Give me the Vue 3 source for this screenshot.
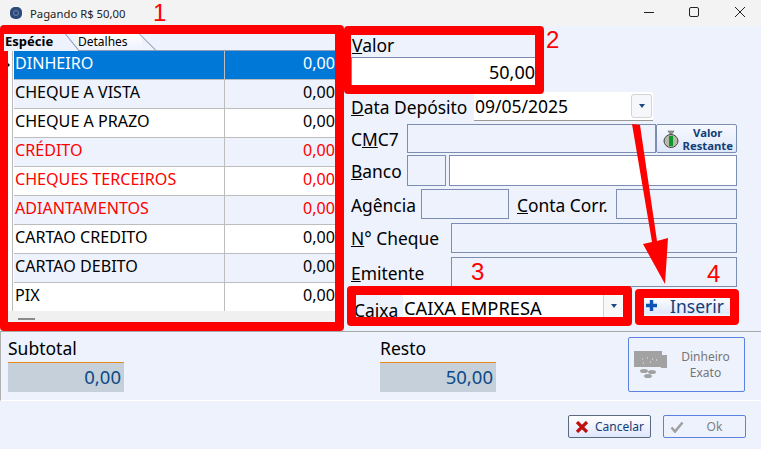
<script setup>
const rows = [
  { name: 'DINHEIRO', kind: 'sel' },
  { name: 'CHEQUE A VISTA', kind: '' },
  { name: 'CHEQUE A PRAZO', kind: '' },
  { name: 'CRÉDITO', kind: 'red' },
  { name: 'CHEQUES TERCEIROS', kind: 'red' },
  { name: 'ADIANTAMENTOS', kind: 'red' },
  { name: 'CARTAO CREDITO', kind: '' },
  { name: 'CARTAO DEBITO', kind: '' },
  { name: 'PIX', kind: '' }
]
</script>

<template>
  <div class="win">
    <header class="title">
      <span class="appicon"><i></i></span>
      <span class="ttext">Pagando R$ 50,00</span>
      <svg class="wc" width="117" height="12" viewBox="0 0 117 12">
        <path d="M0 6.5h10" stroke="#222" fill="none"/>
        <rect x="45.5" y="1.5" width="9" height="9" rx="1.5" stroke="#222" fill="none"/>
        <path d="M91 1l10 10M101 1L91 11" stroke="#222" fill="none"/>
      </svg>
    </header>

    <main class="main">
      <section class="left">
        <div class="tabs">
          <span class="tab on">Espécie</span>
          <span class="tab">Detalhes</span>
        </div>
        <div class="grid">
          <span class="marker"></span>
          <div v-for="(r, i) in rows" :key="r.name" class="row" :class="[r.kind, i % 2 ? 'odd' : 'even']">
            <span class="name">{{ r.name }}</span>
            <span class="amt">0,00</span>
          </div>
        </div>
        <div class="hscroll"><span class="thumb"></span></div>
      </section>

      <section class="form">
        <div class="valor">
          <div class="vlabel"><u>V</u>alor</div>
          <div class="vinput">50,00</div>
        </div>
        <div class="frow date">
          <label class="l1"><u>D</u>ata Depósito</label>
          <div class="datebox">09/05/2025<span class="ddbtn"><i class="tri"></i></span></div>
        </div>
        <div class="frow cmc">
          <label class="l2">C<u>M</u>C7</label>
          <div class="inp w248"></div>
          <button class="vr">
            <svg width="16" height="18" viewBox="0 0 16 18">
              <path d="M5 1h6l-2 3h-2z" fill="#9a9a8a" stroke="#555" stroke-width=".5"/>
              <ellipse cx="8" cy="11" rx="7" ry="6.5" fill="#b8b8a8" stroke="#444"/>
              <rect x="6" y="6" width="4" height="10" fill="#0a9a2a"/>
            </svg>
            <span>Valor<br>Restante</span>
          </button>
        </div>
        <div class="frow banco">
          <label class="l2"><u>B</u>anco</label>
          <div class="inp w39"></div>
          <div class="inp white grow"></div>
        </div>
        <div class="frow ag">
          <label class="l3">Agência</label>
          <div class="inp w88"></div>
          <label class="l4"><u>C</u>onta Corr.</label>
          <div class="inp grow"></div>
        </div>
        <div class="frow ch">
          <label class="l5"><u>N</u>° Cheque</label>
          <div class="inp grow"></div>
        </div>
        <div class="frow em">
          <label class="l5"><u>E</u>mitente</label>
          <div class="inp grow"></div>
        </div>
        <div class="frow cx">
          <label class="caixa">Caixa</label>
          <div class="select">CAIXA EMPRESA<span class="selbtn"><i class="tri"></i></span></div>
          <button class="ins">
            <svg width="13" height="13" viewBox="0 0 13 13"><path d="M6.5 1v11M1 6.5h11" stroke="#0d55b5" stroke-width="3.4"/></svg>
            <span>Inserir</span>
          </button>
        </div>
      </section>
    </main>

    <section class="summary">
      <div class="sum s1">
        <div class="slabel">Subtotal</div>
        <div class="sval">0,00</div>
      </div>
      <div class="sum s2">
        <div class="slabel">Resto</div>
        <div class="sval">50,00</div>
      </div>
      <button class="exato">
        <svg width="33" height="28" viewBox="0 0 33 28">
          <rect x="0" y="0" width="28" height="16" fill="#a2a2a2"/>
          <rect x="27" y="4" width="6" height="13" fill="#a2a2a2"/>
          <path d="M8 8h1M13 7h1M18 8h1M22 9h1M9 12h1M16 11h1" stroke="#eee" stroke-width="1"/>
          <ellipse cx="10" cy="20" rx="4" ry="2" fill="#a2a2a2"/>
          <ellipse cx="18" cy="21" rx="4" ry="2" fill="#a2a2a2"/>
          <ellipse cx="14" cy="25" rx="4" ry="2" fill="#a2a2a2"/>
        </svg>
        <span>Dinheiro<br>Exato</span>
      </button>
    </section>

    <footer class="foot">
      <button class="fbtn cancel">
        <svg width="14" height="12" viewBox="0 0 14 12"><path d="M2 1l10 10M12 1L2 11" stroke="#c00f0f" stroke-width="3.2"/></svg>
        <span>Cancelar</span>
      </button>
      <button class="fbtn ok">
        <svg width="14" height="12" viewBox="0 0 14 12"><path d="M1.5 6.5l3.5 4L12.5 1.5" stroke="#a0a0a0" stroke-width="2.6" fill="none"/></svg>
        <span>Ok</span>
      </button>
    </footer>

    <!-- annotations drawn over the screenshot -->
    <div class="mark m1"></div>
    <div class="mark m2"></div>
    <div class="mark m3"></div>
    <div class="mark m4"></div>
    <span class="num n1">1</span>
    <span class="num n2">2</span>
    <span class="num n3">3</span>
    <span class="num n4">4</span>
    <svg class="arrow" width="761" height="449" viewBox="0 0 761 449">
      <path d="M632 124l8 1 17 116 11-3-3 46-22-40 9-2z" fill="#f00"/>
    </svg>
  </div>
</template>

<style>
html, body { margin: 0; padding: 0; background: #edf2fc; }
</style>

<style scoped>
.win {
  position: relative; width: 761px; height: 449px; overflow: hidden;
  display: flex; flex-direction: column; background: #edf2fc;
  font-family: "Noto Sans", "DejaVu Sans", sans-serif; color: #000;
}
.title { height: 26px; background: #f3f3f3; display: flex; align-items: center; padding-left: 10px; position: relative; flex: none; }
.appicon { width: 12px; height: 12px; border-radius: 5px; background: #2c4a78; display: flex; align-items: center; justify-content: center; }
.appicon i { width: 4px; height: 4px; border: 1px solid #6f86ab; border-radius: 50%; }
.ttext { font-size: 11.3px; margin-left: 8px; color: #222; }
.wc { position: absolute; left: 644px; top: 6px; }

.main { height: 305px; display: flex; flex: none; border-bottom: 1px solid #a8a8a8; }
.left { width: 327px; margin-left: 8px; margin-right: 16px; padding-top: 8px; flex: none; }
.tabs { height: 16px; display: flex; background: #edf2fc; border-bottom: 1px solid #8b9bb8; }
.tab { font-size: 12px; line-height: 15px; position: relative; height: 16px; box-sizing: border-box; }
.tab.on { font-size: 13px; font-weight: 700; margin-left: -4px; width: 74px; height: 17px; padding-left: 1px; background: #edf2fc; z-index: 1; }
.tab.on::after { content: ""; position: absolute; left: 61px; top: 0; width: 1px; height: 21px; background: #8b9bb8; transform: rotate(-39deg); transform-origin: top; }
.tab:not(.on) { background: linear-gradient(#fff, #edf2fc); width: 64px; padding-left: 0; }
.tab:not(.on)::after { content: ""; position: absolute; left: 61px; top: 0; width: 1px; height: 23px; background: #8b9bb8; transform: rotate(-45deg); transform-origin: top; }
.grid { position: relative; padding-left: 4px; background: #fff; }
.grid::before { content: ""; position: absolute; left: 4px; top: 0; bottom: 0; width: 1px; background: #bbb; }
.marker { position: absolute; left: 0; top: 12px; border-left: 2px solid #000; border-top: 2px solid transparent; border-bottom: 2px solid transparent; z-index: 2; }
.row { height: 28px; margin-left: 2px; border-bottom: 1px solid #bdbdbd; display: flex; font-size: 16.1px; line-height: 25px; }
.row:last-of-type { border-bottom: 0; }
.row.even { background: #fff; }
.row.odd { background: #edf2fc; }
.row.sel { background: #0078d7; color: #fff; }
.row.red { color: #f00; }
.row .name { width: 209px; padding-left: 1px; border-right: 1px solid #bdbdbd; }
.row .amt { flex: 1; text-align: right; }
.hscroll { height: 11px; background: #f0f0f0; position: relative; }
.thumb { position: absolute; left: 10px; top: 7px; width: 17px; height: 2px; background: #8a8a8a; }

.form { flex: 1; position: relative; }
.valor { width: 184px; margin-top: 9px; }
.vlabel { height: 22px; font-size: 17.5px; line-height: 21px; background: #edf2fc; padding-left: 1px; }
.vinput { height: 28px; background: #fff; border-top: 1px solid #7b8db0; border-left: 1px solid #7b8db0; box-sizing: border-box; text-align: right; font-size: 18px; line-height: 28px; }
.frow { display: flex; align-items: center; }
label { font-size: 17.4px; flex: none; box-sizing: border-box; }
.date { margin-top: 7px; height: 29px; }
.l1 { width: 123px; }
.datebox { position: relative; width: 179px; height: 29px; background: #fff; border-bottom: 1px solid #999; box-sizing: border-box; font-size: 17.5px; line-height: 28px; padding-left: 1px; }
.ddbtn { position: absolute; right: 1px; top: 2px; width: 21px; height: 24px; background: #f5f7fb; border: 1px solid #d4d4d4; border-radius: 3px; box-sizing: border-box; display: flex; align-items: center; justify-content: center; }
.tri { display: block; border-top: 4px solid #1c4a80; border-left: 3.5px solid transparent; border-right: 3.5px solid transparent; }
.inp { border: 1px solid #7b8db0; box-sizing: border-box; height: 100%; flex: none; }
.inp.white { background: #fff; }
.inp.grow { flex: 1; }
.cmc { margin-top: 3px; height: 29px; width: 386px; }
.l2 { width: 56px; }
.w248 { width: 249px; }
.vr { width: 81px; height: 29px; border: 1px solid #7b8db0; border-radius: 2px; background: linear-gradient(#f7f9fe, #dfe7fb); padding: 0 3px 0 6px; display: flex; align-items: center; justify-content: space-between; font: 700 11.3px/13px "Noto Sans", sans-serif; color: #123e78; flex: none; box-sizing: border-box; }
.vr span { text-align: center; }
.banco { margin-top: 2px; height: 31px; width: 386px; }
.w39 { width: 39px; margin-right: 3px; }
.ag { margin-top: 3px; height: 30px; width: 386px; }
.ag label { padding-top: 1px; }
.l3 { width: 70px; }
.w88 { width: 88px; }
.l4 { width: 99px; margin-left: 8px; }
.ch { margin-top: 4px; height: 30px; width: 386px; }
.l5 { width: 100px; }
.em { margin-top: 4px; height: 30px; width: 386px; }
.em label { padding-top: 1px; }
.cx { margin-top: 11px; height: 18px; width: 386px; align-items: stretch; position: relative; }
.caixa { width: 52px; padding-left: 3px; line-height: 25px; }
.select { position: relative; width: 220px; height: 22px; margin-top: -3px; background: #fff; font-size: 18.3px; line-height: 25px; padding-left: 1px; box-sizing: border-box; }
.selbtn { position: absolute; right: 0; top: 0; width: 20px; height: 22px; border-left: 1px solid #d0d0d0; background: #f8f8f8; display: flex; align-items: center; justify-content: center; box-sizing: border-box; }
.ins { position: absolute; left: 293px; top: -2px; width: 86px; height: 18px; border: 0; padding: 0 0 0 1px; background: linear-gradient(#fff, #dfe7fb); display: flex; align-items: center; gap: 12px; font: 17.5px/18px "Noto Sans", sans-serif; color: #123e78; }
.ins span { position: relative; top: 1px; }

.summary { height: 68px; position: relative; display: flex; flex: none; border-bottom: 1px solid #fff; border-left: 1px solid #b0b0b0; }
.sum { width: 116px; padding-top: 5px; flex: none; }
.s1 { margin-left: 7px; }
.s2 { margin-left: 256px; }
.slabel { font-size: 17.5px; line-height: 22px; height: 25px; }
.sval { height: 30px; background: #c5d0db; border-top: 1px solid #e88a1a; box-sizing: border-box; text-align: right; font-size: 18.5px; line-height: 28px; color: #0b4a85; padding-right: 3px; }
.exato { margin-left: 132px; margin-top: 5px; width: 117px; height: 55px; border: 1px solid #5b82e0; border-radius: 2px; background: #edf2fc; padding: 0 0 0 5px; display: flex; align-items: center; font: 12px/16px "Noto Sans", sans-serif; color: #767676; flex: none; box-sizing: border-box; }
.exato span { flex: 1; text-align: center; }

.foot { flex: 1; display: flex; align-items: flex-start; padding: 14px 15px 0 0; justify-content: flex-end; gap: 12px; }
.fbtn { width: 83px; height: 23px; border-radius: 2px; box-sizing: border-box; display: flex; align-items: center; padding: 0 0 0 6px; font: 12px/21px "Noto Sans", sans-serif; }
.fbtn span { flex: 1; text-align: center; }
.cancel { border: 1px solid #5a6a80; background: linear-gradient(#fff, #dfe7fb); color: #123e78; }
.ok { border: 1px solid #5b82e0; background: #edf2fc; color: #808080; }

.mark { position: absolute; border-style: solid; border-color: #f00; box-sizing: border-box; border-radius: 4px; pointer-events: none; }
.m1 { left: 0; top: 25px; width: 344px; height: 306px; border-width: 9px 9px 9px 8px; }
.m2 { left: 344px; top: 26px; width: 200px; height: 68px; border-width: 9px 9px 9px 7px; }
.m3 { left: 347px; top: 286px; width: 285px; height: 40px; border-width: 9px; }
.m4 { left: 635px; top: 289px; width: 104px; height: 36px; border-width: 9px; }
.num { position: absolute; color: #f00; font: 24px/24px "Liberation Sans", sans-serif; }
.n1 { left: 153px; top: 1px; }
.n2 { left: 546px; top: 28px; }
.n3 { left: 471px; top: 260px; }
.n4 { left: 707px; top: 262px; }
.arrow { position: absolute; left: 0; top: 0; pointer-events: none; }
</style>
